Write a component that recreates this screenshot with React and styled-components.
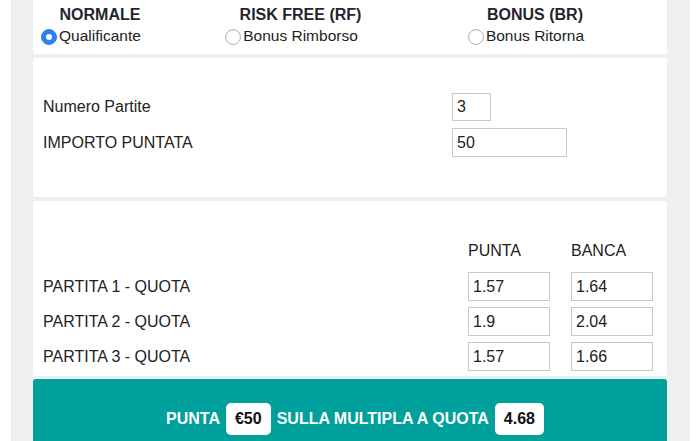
import styled, { createGlobalStyle } from "styled-components";

const GlobalStyle = createGlobalStyle`
  html, body {
    margin: 0;
    padding: 0;
    background: #ffffff;
    font-family: "Liberation Sans", Arial, Helvetica, sans-serif;
    color: #222;
    overflow: hidden;
  }
`;

const Page = styled.div`
  margin: 0 10px 0 11px;
  padding: 0 23px 0 22px;
  background: #eef0ef;
  height: 441px;
  display: flex;
  flex-direction: column;
  gap: 4px;
`;

const Card = styled.div`
  background: #fff;
  border-radius: 3px;
  padding: ${(p) => p.pad || "0"};
`;

const TypeCard = styled(Card)`
  display: grid;
  grid-template-columns: 134px 267px 202px;
  grid-template-rows: 18px 18px;
  row-gap: 3px;
  padding: 6px 0 9px 0;
  border-radius: 0 0 3px 3px;
`;

const TypeTitle = styled.div`
  font-weight: bold;
  font-size: 16px;
  line-height: 18px;
  text-align: center;
  color: #1f2630;
`;

const RadioOption = styled.label`
  display: flex;
  justify-content: center;
  align-items: center;
  gap: 2px;
  padding-right: 18px;
  font-size: 15.5px;
  line-height: 18px;
  color: #222;
`;

const Radio = styled.span`
  width: 16px;
  height: 16px;
  box-sizing: border-box;
  border-radius: 50%;
  flex: none;
  margin-top: 1px;
  background: ${(p) => (p.checked ? "#2d7ff6" : "#fff")};
  border: 1px solid ${(p) => (p.checked ? "#2d7ff6" : "#b4b4b4")};
  box-shadow: ${(p) => (p.checked ? "none" : "inset 0 1px 1px rgba(0,0,0,0.08)")};
  display: flex;
  align-items: center;
  justify-content: center;
  &::after {
    content: "";
    display: ${(p) => (p.checked ? "block" : "none")};
    width: 6px;
    height: 6px;
    border-radius: 50%;
    background: #fff;
  }
`;

const FormGrid = styled.div`
  display: grid;
  grid-template-columns: ${(p) => p.cols};
  column-gap: 21px;
  row-gap: ${(p) => p.rowGap || "6px"};
  align-items: center;
`;

const Label = styled.div`
  font-size: 16px;
  line-height: 20px;
  color: #222;
`;

const Input = styled.input`
  box-sizing: border-box;
  width: ${(p) => p.w || "82px"};
  height: ${(p) => p.h || "29px"};
  border: 1px solid #c8c8c8;
  border-radius: 0;
  padding: 0 4px;
  font-family: inherit;
  font-size: 16px;
  color: #222;
  background: #fff;
  outline: none;
`;

const Header = styled.div`
  font-size: 16px;
  line-height: 20px;
  color: #222;
  margin-bottom: 5px;
`;

const CtaBar = styled.div`
  background: #00a09c;
  border-radius: 3px 3px 0 0;
  padding: 24px 0 20px;
  margin-top: -1px;
  display: flex;
  justify-content: center;
  align-items: center;
  gap: 6px;
  padding-left: 10px;
`;

const CtaText = styled.span`
  color: #fff;
  font-weight: bold;
  font-size: 16px;
`;

const CtaBox = styled.span`
  background: #fff;
  color: #111;
  font-weight: bold;
  font-size: 16px;
  height: 32px;
  padding: 0 9px;
  border-radius: 5px;
  display: inline-flex;
  align-items: center;
`;

const partite = [
  { name: "PARTITA 1 - QUOTA", punta: "1.57", banca: "1.64" },
  { name: "PARTITA 2 - QUOTA", punta: "1.9", banca: "2.04" },
  { name: "PARTITA 3 - QUOTA", punta: "1.57", banca: "1.66" },
];

export default function App() {
  return (
    <>
      <GlobalStyle />
      <Page>
        <TypeCard>
          <TypeTitle>NORMALE</TypeTitle>
          <TypeTitle>RISK FREE (RF)</TypeTitle>
          <TypeTitle>BONUS (BR)</TypeTitle>
          <RadioOption>
            <Radio checked />
            Qualificante
          </RadioOption>
          <RadioOption>
            <Radio />
            Bonus Rimborso
          </RadioOption>
          <RadioOption>
            <Radio />
            Bonus Ritorna
          </RadioOption>
        </TypeCard>

        <Card pad="35px 0 40px 10px">
          <FormGrid cols="388px auto" rowGap="7px">
            <Label>Numero Partite</Label>
            <Input w="39px" h="28px" defaultValue="3" />
            <Label>IMPORTO PUNTATA</Label>
            <Input w="115px" defaultValue="50" />
          </FormGrid>
        </Card>

        <Card pad="40px 0 5px 10px">
          <FormGrid cols="404px 82px 82px">
            <span />
            <Header>PUNTA</Header>
            <Header>BANCA</Header>
            {partite.map((p) => (
              <>
                <Label key={p.name}>{p.name}</Label>
                <Input defaultValue={p.punta} />
                <Input defaultValue={p.banca} />
              </>
            ))}
          </FormGrid>
        </Card>

        <CtaBar>
          <CtaText>PUNTA</CtaText>
          <CtaBox>€50</CtaBox>
          <CtaText>SULLA MULTIPLA A QUOTA</CtaText>
          <CtaBox>4.68</CtaBox>
        </CtaBar>
      </Page>
    </>
  );
}
